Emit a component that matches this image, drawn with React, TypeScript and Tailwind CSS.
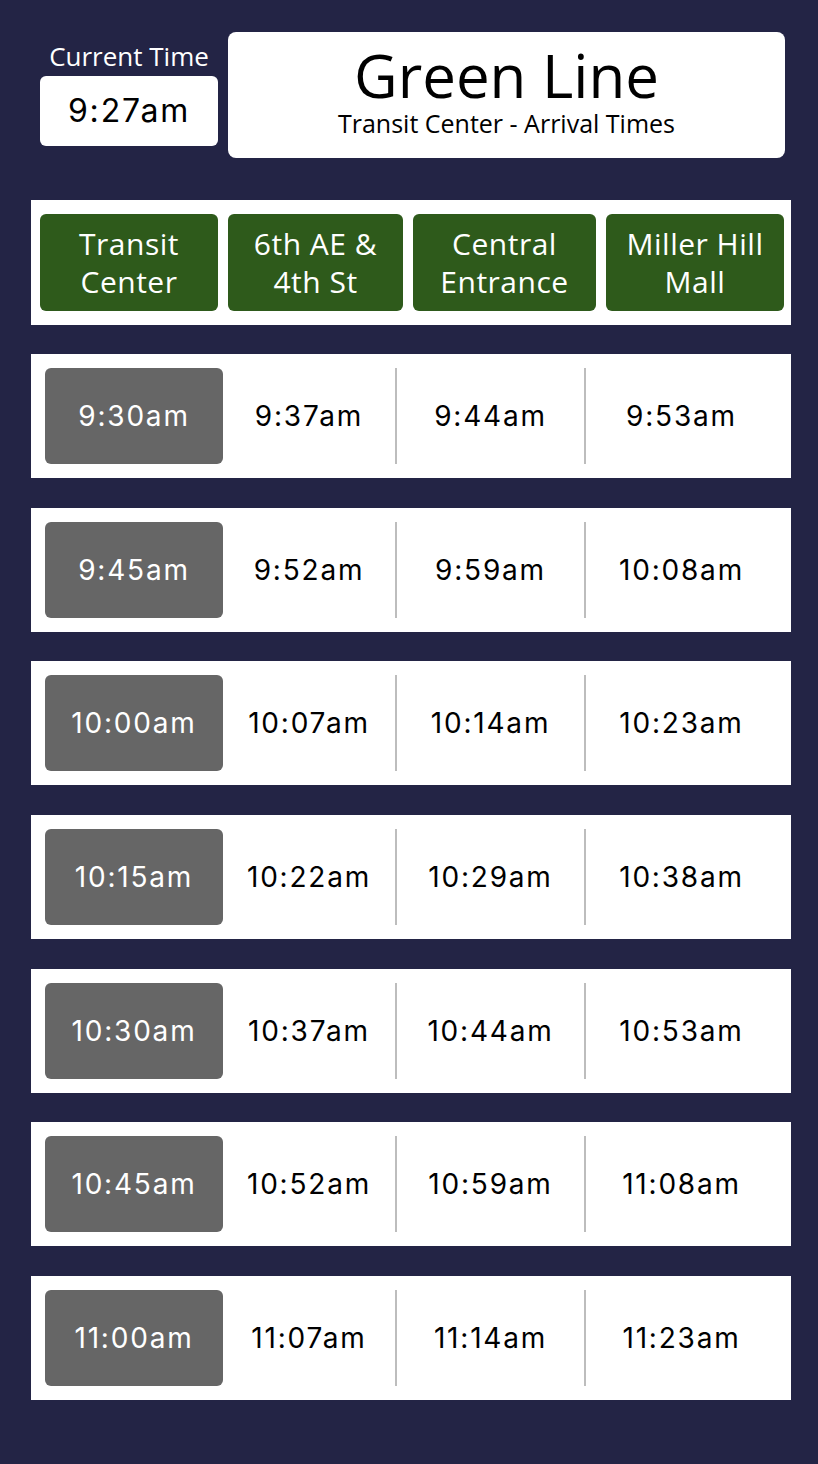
import React from 'react';

const STOPS = [
  { label: 'Transit Center', lines: ['Transit', 'Center'], w: 'w-[178px]' },
  { label: '6th AE & 4th St', lines: ['6th AE &', '4th St'], w: 'w-[175px]' },
  { label: 'Central Entrance', lines: ['Central', 'Entrance'], w: 'w-[183px]' },
  { label: 'Miller Hill Mall', lines: ['Miller Hill', 'Mall'], w: 'w-[178px]' },
];

const TRIPS = [
  ['9:30am', '9:37am', '9:44am', '9:53am'],
  ['9:45am', '9:52am', '9:59am', '10:08am'],
  ['10:00am', '10:07am', '10:14am', '10:23am'],
  ['10:15am', '10:22am', '10:29am', '10:38am'],
  ['10:30am', '10:37am', '10:44am', '10:53am'],
  ['10:45am', '10:52am', '10:59am', '11:08am'],
  ['11:00am', '11:07am', '11:14am', '11:23am'],
];

const HEAD_FONT = "font-['Open_Sans',sans-serif]";
const TIME_FONT = "font-['Inter',sans-serif] tracking-[1.8px]";

function TripRow({ times }: { times: string[] }) {
  return (
    <div className="flex h-[124px] items-center bg-white px-[14px]">
      <div className={`flex h-[96px] w-[178px] items-center justify-center rounded-md bg-[#666666] text-[28px] text-white ${TIME_FONT}`}>
        {times[0]}
      </div>
      <div className={`flex w-[172px] justify-center text-[28px] text-black ${TIME_FONT}`}>{times[1]}</div>
      <div className="h-[96px] w-[2px] bg-[#bdbdbd]" />
      <div className={`flex w-[187px] justify-center text-[28px] text-black ${TIME_FONT}`}>{times[2]}</div>
      <div className="h-[96px] w-[2px] bg-[#bdbdbd]" />
      <div className={`flex flex-1 justify-center text-[28px] text-black ${TIME_FONT}`}>{times[3]}</div>
    </div>
  );
}

export default function App() {
  return (
    <div className="min-h-[1464px] w-[818px] bg-[#232445]">
      <div className="ml-[31px] w-[760px] pt-[32px]">
        {/* Top bar */}
        <div className="flex gap-[10px] pl-[9px] pr-[6px]">
          <div className="flex w-[178px] flex-col items-center pt-[8px]">
            <span className={`text-[26px] leading-[32px] text-white ${HEAD_FONT}`}>Current Time</span>
            <div className={`mt-[4px] flex h-[70px] w-full items-center justify-center rounded-md bg-white text-[32px] text-black ${TIME_FONT}`}>
              9:27am
            </div>
          </div>
          <div className={`flex h-[126px] flex-1 flex-col items-center rounded-lg bg-white pt-[11px] text-black ${HEAD_FONT}`}>
            <span className="text-[60px] leading-[64px]">Green Line</span>
            <span className="mt-[2px] text-[25px] leading-[28px]">Transit Center - Arrival Times</span>
          </div>
        </div>

        {/* Stop header */}
        <div className="mt-[42px] flex h-[125px] items-center gap-[10px] bg-white pl-[9px] pr-[6px]">
          {STOPS.map((s) => (
            <div
              key={s.label}
              className={`flex h-[97px] flex-col items-center justify-center rounded-md bg-[#2e5a1b] text-[30px] leading-[38px] tracking-[0.5px] text-white ${s.w} ${HEAD_FONT}`}
            >
              {s.lines.map((l) => (
                <span key={l}>{l}</span>
              ))}
            </div>
          ))}
        </div>

        {/* Trips */}
        <div className="mt-[29px] flex flex-col gap-[29.7px]">
          {TRIPS.map((t) => (
            <TripRow key={t[0]} times={t} />
          ))}
        </div>
      </div>
    </div>
  );
}
